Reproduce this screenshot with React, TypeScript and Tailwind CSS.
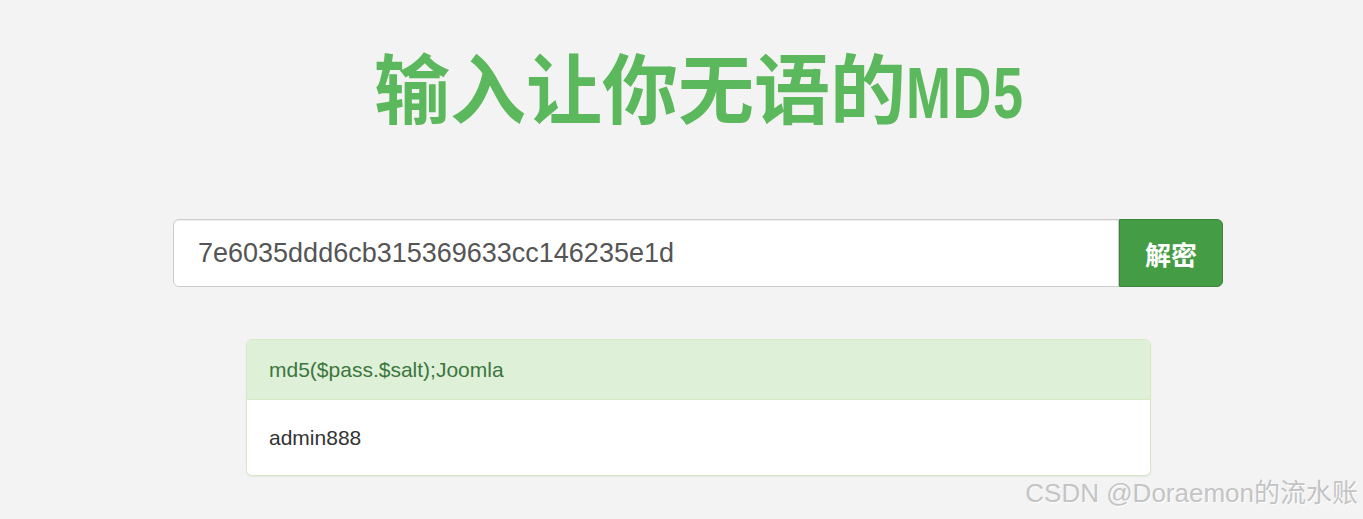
import React, { useState } from 'react';

const App: React.FC = () => {
  const [hash, setHash] = useState('7e6035ddd6cb315369633cc146235e1d');

  return (
    <div className="relative h-[519px] overflow-hidden bg-[#f3f3f3] font-['Liberation_Sans','Noto_Sans_CJK_SC',sans-serif]">
      <div className="ml-[173px] w-[1050px] pt-[40px]">
        {/* Title */}
        <h1 className="flex h-[96px] items-center justify-center">
          <span className="inline-block whitespace-nowrap text-[76px] font-bold leading-none text-[#5cb85c]">
            <span className="font-['Noto_Sans_CJK_SC',sans-serif]">输入让你无语的</span>
            <span className="inline-block w-[116px] align-baseline">
              <span className="inline-block origin-left scale-x-[0.75] font-['Liberation_Sans',sans-serif] text-[72px] tracking-[2px]">MD5</span>
            </span>
          </span>
        </h1>

        {/* Search */}
        <div className="mt-[83px] flex h-[68px]">
          <input
            className="min-w-0 flex-1 rounded-l-[6px] border border-[#cccccc] bg-white px-[24px] text-[27px] text-[#555555] shadow-[inset_0_1px_1px_rgba(0,0,0,0.075)] outline-none"
            value={hash}
            onChange={(e) => setHash(e.target.value)}
          />
          <button className="w-[104px] rounded-r-[6px] border border-[#398439] bg-[#449d44] font-['Noto_Sans_CJK_SC',sans-serif] text-[26px] font-bold text-white">
            解密
          </button>
        </div>

        {/* Result */}
        <div className="ml-[73px] mr-[72px] mt-[52px] overflow-hidden rounded-[6px] border border-[#d6e9c6] bg-white shadow-[0_1px_2px_rgba(0,0,0,0.06)]">
          <div className="flex h-[60px] items-center border-b border-[#d6e9c6] bg-[#dff0d8] px-[22px] text-[21px] text-[#3c763d]">
            md5($pass.$salt);Joomla
          </div>
          <div className="flex h-[75px] items-center px-[22px] text-[21px] text-[#333333]">
            admin888
          </div>
        </div>
      </div>

      {/* Watermark */}
      <div className="absolute bottom-[6px] right-[5px] whitespace-nowrap text-[26px] text-[#c4c4c4] [text-shadow:1px_1px_1px_rgba(255,255,255,0.9)]">
        CSDN @Doraemon的流水账
      </div>
    </div>
  );
};

export default App;
